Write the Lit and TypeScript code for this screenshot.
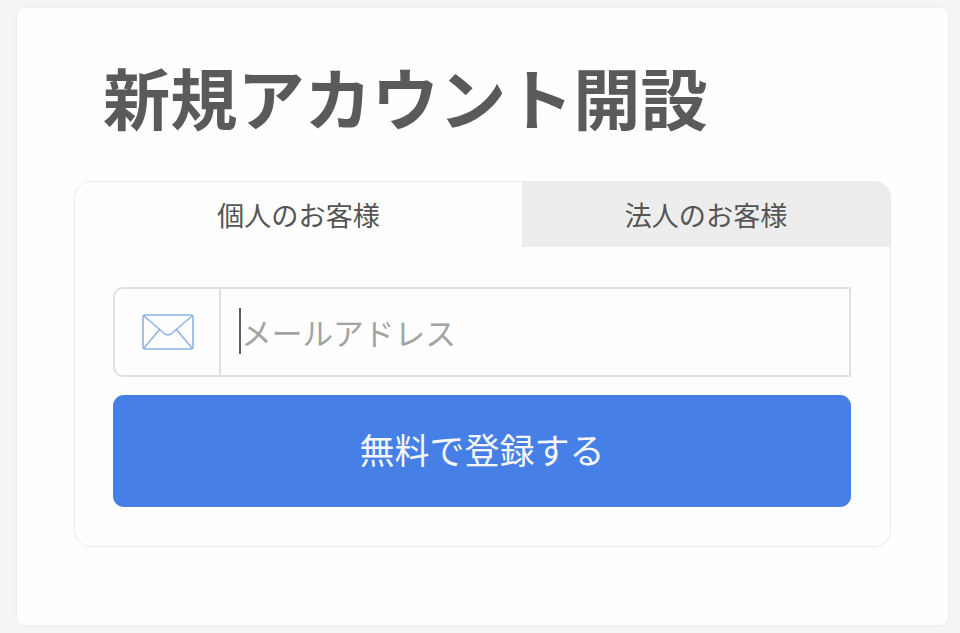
import { LitElement, html, css } from "lit";
import { customElement } from "lit/decorators.js";

@customElement("app-root")
export class AppRoot extends LitElement {
  static styles = css`
    :host {
      display: block;
      width: 960px;
      height: 633px;
      box-sizing: border-box;
      padding: 8px 12px 8px 17px;
      background: #f5f5f5;
      font-family: "Noto Sans CJK JP", "Liberation Sans", sans-serif;
    }
    .page {
      box-sizing: border-box;
      height: 617px;
      background: #fefefe;
      border-radius: 8px;
      box-shadow: 0 0 3px #e4e4e4;
      padding: 0 57px;
      display: flex;
      flex-direction: column;
    }
    h1 {
      margin: 0;
      height: 173px;
      box-sizing: border-box;
      padding: 44px 0 0 29px;
      font-size: 67.2px;
      line-height: 88px;
      font-weight: 700;
      color: #5a5a5a;
      white-space: nowrap;
    }
    .card {
      box-sizing: border-box;
      width: 817px;
      height: 366px;
      border: 1.5px solid #ebebeb;
      border-radius: 16px;
      overflow: hidden;
      background: #fefefe;
    }
    .tabs {
      display: flex;
      height: 65px;
    }
    .tab {
      display: flex;
      align-items: center;
      justify-content: center;
      font-size: 27.2px;
      color: #555;
      white-space: nowrap;
      padding-bottom: 1px;
      box-sizing: border-box;
    }
    .tab.on {
      width: 447px;
    }
    .tab.off {
      flex: 1;
      background: #ededed;
    }
    .body {
      padding: 40px 39px 0 38px;
      display: flex;
      flex-direction: column;
      gap: 18px;
    }
    .field {
      box-sizing: border-box;
      height: 90px;
      border: 2px solid #e0e0e0;
      border-radius: 10px 0 0 10px;
      display: flex;
    }
    .icon {
      width: 106px;
      flex: none;
      border-right: 2px solid #e0e0e0;
      display: flex;
      align-items: center;
      justify-content: center;
      padding-left: 1px;
      box-sizing: border-box;
    }
    .input {
      flex: 1;
      display: flex;
      align-items: center;
      padding-left: 18px;
      padding-bottom: 2px;
      font-size: 30.7px;
      color: #a3a3a3;
      white-space: nowrap;
    }
    .caret {
      width: 2px;
      height: 46px;
      background: #5a5f66;
    }
    .btn {
      height: 112px;
      border-radius: 11px;
      background: #4680e6;
      color: #f5f7fc;
      font-size: 35px;
      display: flex;
      align-items: center;
      justify-content: center;
      white-space: nowrap;
      padding-bottom: 5px;
      box-sizing: border-box;
    }
  `;

  render() {
    return html`
      <div class="page">
        <h1>新規アカウント開設</h1>
        <div class="card">
          <div class="tabs">
            <div class="tab on">個人のお客様</div>
            <div class="tab off">法人のお客様</div>
          </div>
          <div class="body">
            <div class="field">
              <div class="icon">
                <svg width="52" height="36" viewBox="0 0 52 36" fill="none" stroke="#8fb2e6" stroke-width="1.6" stroke-linejoin="round">
                  <rect x="1" y="1" width="50" height="34" rx="2"></rect>
                  <path d="M2 2 L23 20 Q26 22 29 20 L50 2"></path>
                  <path d="M2 34 L18 15"></path>
                  <path d="M50 34 L34 15"></path>
                </svg>
              </div>
              <div class="input"><span class="caret"></span>メールアドレス</div>
            </div>
            <div class="btn">無料で登録する</div>
          </div>
        </div>
      </div>
    `;
  }
}
